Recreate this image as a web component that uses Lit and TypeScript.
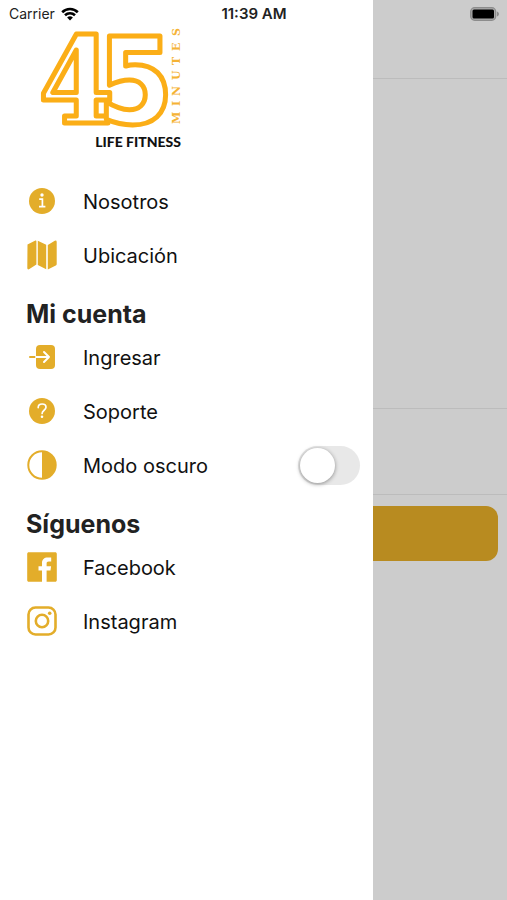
import { LitElement, html, css, svg } from "lit";
import { customElement, property, state } from "lit/decorators.js";

const icons = {
  info: svg`
    <circle cx="15" cy="15" r="13" fill="currentColor" />
    <circle cx="15" cy="9" r="1.700" fill="#fff" />
    <path d="M12.200 13.200h3.200v7M12 20.600h6.400" fill="none" stroke="#fff" stroke-width="1.700" />`,
  map: svg`
    <path d="M0.5 4.6 8.4 0.6Q9.4 0.2 9.4 1.2V24.6L2.4 29.1Q0.3 30 0.3 28Z M10.8 0.8 19.2 4.8V29.2L10.8 25Z M20.8 5 27.8 0.7Q29.7 0 29.7 2V24Q29.7 25 28.8 25.5L20.8 29.4Z" fill="currentColor" />`,
  login: svg`
    <path d="M3 15h7" stroke="currentColor" stroke-width="2" stroke-linecap="round" />
    <rect x="9" y="3" width="19" height="24" rx="4" fill="currentColor" />
    <path d="M9 15h13M17 10l5 5-5 5" fill="none" stroke="#fff" stroke-width="2" stroke-linecap="round" stroke-linejoin="round" />`,
  help: svg`
    <circle cx="15" cy="15" r="13" fill="currentColor" />
    <path d="M11.2 11.6c0-2.3 1.7-3.6 3.9-3.6 2.300 0 3.900 1.400 3.900 3.300 0 2.900-3.900 3-3.900 6.200" fill="none" stroke="#fff" stroke-width="1.700" stroke-linecap="round" />
    <circle cx="15" cy="20.800" r="1.300" fill="#fff" />`,
  contrast: svg`
    <circle cx="15" cy="15" r="13.700" fill="none" stroke="currentColor" stroke-width="2" />
    <path d="M15 1.500a13.500 13.500 0 0 1 0 27Z" fill="currentColor" />`,
  facebook: svg`
    <path d="M28.300 0.200H1.700C.900.200.200.900.200 1.700v26.600c0 .8.700 1.500 1.500 1.500H15V18.500h-3.500v-4.200H15v-3.200c0-3.800 2.300-5.700 5.600-5.700 1.600 0 3.200.1 3.600.2v3.900h-2.400c-1.800 0-2.200.9-2.200 2.100v2.700h4.500l-.6 4.200h-3.900v11.300h8.700c.8 0 1.500-.7 1.500-1.500V1.700c0-.8-.7-1.500-1.500-1.500Z" fill="currentColor" />`,
  instagram: svg`
    <rect x="1.500" y="1.500" width="27" height="27" rx="7" fill="none" stroke="currentColor" stroke-width="2.600" />
    <circle cx="15" cy="15" r="6.200" fill="none" stroke="currentColor" stroke-width="2.600" />
    <circle cx="22.700" cy="7.300" r="1.800" fill="currentColor" />`,
};

type IconName = keyof typeof icons;

@customElement("menu-icon")
class MenuIcon extends LitElement {
  @property() name: IconName = "info";

  static styles = css`
    :host {
      display: block;
      flex: none;
      width: 30px;
      height: 30px;
      color: #e3ad2a;
    }
    .glyph {
      display: block;
      width: 100%;
      height: 100%;
    }
  `;

  render() {
    return html`<svg class="glyph" viewBox="0 0 30 30" aria-hidden="true">${icons[this.name]}</svg>`;
  }
}

@customElement("brand-logo")
class BrandLogo extends LitElement {
  static styles = css`
    :host {
      display: block;
    }
    .logo {
      display: block;
      width: 150px;
      height: 132px;
      overflow: visible;
    }
    .digits {
      font: bold 120px "DejaVu Serif Condensed", "DejaVu Serif", serif;
      fill: #fff;
      stroke: #fbae17;
      stroke-width: 5px;
      stroke-linejoin: round;
    }
    .five {
      font-family: "DejaVu Sans Condensed", "DejaVu Sans", sans-serif;
    }
    .minutes {
      font: bold 11px "DejaVu Serif", serif;
      fill: #f5b335;
    }
    .tagline {
      font: 900 14px Lato, "Liberation Sans", sans-serif;
      fill: #111;
    }
  `;

  render() {
    return html`
      <svg class="logo" viewBox="0 0 150 132" role="img" aria-label="45 Minutes Life Fitness">
        <text class="digits" x="3" y="99">4<tspan class="five" x="62">5</tspan></text>
        <text class="minutes" transform="translate(144 100) rotate(-90)" x="0 18 28 44 59 73 88">MINUTES</text>
        <text class="tagline" x="145" y="123" text-anchor="end">LIFE FITNESS</text>
      </svg>
    `;
  }
}

@customElement("status-bar")
class StatusBar extends LitElement {
  static styles = css`
    :host {
      display: grid;
      grid-template-columns: 1fr auto 1fr;
      align-items: center;
      height: 27px;
      padding: 0 8px 0 9px;
      font: 14px/20px Inter, sans-serif;
      color: #222;
    }
    .carrier {
      display: flex;
      align-items: center;
      gap: 6px;
    }
    .time {
      font-size: 15px;
      font-weight: 600;
    }
    .battery {
      justify-self: end;
    }
  `;

  render() {
    return html`
      <div class="carrier">
        <span>Carrier</span>
        <svg width="18" height="14" viewBox="0 0 18 14" aria-label="Wi-Fi">
          <path d="M1.200 5.200a11.200 11.200 0 0 1 15.600 0M4 8.300a7.200 7.200 0 0 1 10 0" fill="none" stroke="#000" stroke-width="2.600" />
          <path d="M9 13.600 6.100 10.600a4.200 4.200 0 0 1 5.800 0Z" fill="#000" />
        </svg>
      </div>
      <span class="time">11:39 AM</span>
      <svg class="battery" width="29" height="14" viewBox="0 0 29 14" aria-label="Battery full">
        <rect x="0.700" y="0.700" width="25" height="12.600" rx="4" fill="#aaa" stroke="#8c8c8c" stroke-width="1.300" />
        <rect x="2.500" y="2.500" width="21.500" height="9" rx="1.500" fill="#000" />
        <path d="M27 4.500c2.600 .8 2.600 4.200 0 5Z" fill="#8c8c8c" />
      </svg>
    `;
  }
}

@customElement("app-root")
class AppRoot extends LitElement {
  @state() private dark = false;

  static styles = css`
    :host {
      display: grid;
      min-height: 100vh;
      font-family: Inter, sans-serif;
      color: #111;
      background: #fff;
    }
    .page,
    .backdrop,
    .drawer,
    .status {
      grid-area: 1 / 1;
    }
    .status {
      align-self: start;
    }
    .page-header {
      height: 78px;
      border-bottom: 1px solid #ececec;
    }
    .banner {
      height: 329px;
      border-bottom: 1px solid #ececec;
    }
    .field {
      height: 85px;
      border-bottom: 1px solid #ececec;
    }
    .action {
      display: block;
      width: calc(100% - 18px);
      height: 55px;
      margin: 11px 9px;
      border: 0;
      border-radius: 12px;
      background: #e6ae28;
    }
    .backdrop {
      background: rgba(0, 0, 0, 0.2);
    }
    .drawer {
      box-sizing: border-box;
      margin-right: 134px;
      padding: 24px 13px 24px 26px;
      background: #fff;
    }
    .brand {
      margin: 0 0 18px 10px;
    }
    .list {
      margin: 0;
      padding: 0;
      list-style: none;
    }
    .row {
      display: flex;
      align-items: center;
      gap: 26px;
      height: 54px;
      padding-left: 1px;
      font-size: 20px;
      line-height: 28px;
      color: inherit;
      text-decoration: none;
    }
    .label {
      flex: 1;
      padding-top: 2px;
    }
    .title {
      height: 32px;
      margin: 0;
      padding-top: 16px;
      font-size: 25px;
      line-height: 32px;
      font-weight: 700;
      color: #222;
    }
    .toggle {
      appearance: none;
      display: flex;
      align-items: center;
      width: 62px;
      height: 39px;
      margin: 0;
      padding: 2px;
      box-sizing: border-box;
      border-radius: 20px;
      background: #e8e8e8;
    }
    .toggle::before {
      content: "";
      width: 35px;
      height: 35px;
      border-radius: 50%;
      background: #fff;
      box-shadow: 0 1px 4px rgba(0, 0, 0, 0.4);
    }
    .toggle:checked {
      justify-content: flex-end;
      background: #e3ad2a;
    }
  `;

  private link(icon: IconName, label: string) {
    return html`
      <li>
        <a class="row" href="#">
          <menu-icon name=${icon}></menu-icon>
          <span class="label">${label}</span>
        </a>
      </li>
    `;
  }

  render() {
    return html`
      <main class="page">
        <header class="page-header"></header>
        <div class="banner"></div>
        <div class="field"></div>
        <button class="action" aria-label="Continuar"></button>
      </main>
      <div class="backdrop"></div>
      <nav class="drawer">
        <brand-logo class="brand"></brand-logo>
        <ul class="list">
          ${this.link("info", "Nosotros")} ${this.link("map", "Ubicación")}
        </ul>
        <h2 class="title">Mi cuenta</h2>
        <ul class="list">
          ${this.link("login", "Ingresar")} ${this.link("help", "Soporte")}
          <li class="row">
            <menu-icon name="contrast"></menu-icon>
            <label class="label" for="dark-mode">Modo oscuro</label>
            <input
              class="toggle"
              id="dark-mode"
              type="checkbox"
              role="switch"
              .checked=${this.dark}
              @change=${(e: Event) => (this.dark = (e.target as HTMLInputElement).checked)}
            />
          </li>
        </ul>
        <h2 class="title">Síguenos</h2>
        <ul class="list">
          ${this.link("facebook", "Facebook")} ${this.link("instagram", "Instagram")}
        </ul>
      </nav>
      <status-bar class="status"></status-bar>
    `;
  }
}
